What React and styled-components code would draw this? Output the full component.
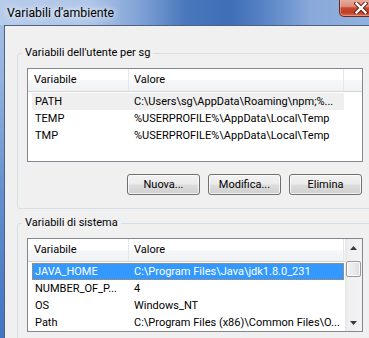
import React from "react";
import styled, { createGlobalStyle } from "styled-components";

const FONT = `Roboto, "Liberation Sans", sans-serif`;

const GlobalStyle = createGlobalStyle`
  html, body { margin: 0; padding: 0; overflow: hidden; background: #f0f0f0; }
  body { font-family: ${FONT}; font-size: 11px; color: #000; }
  * { box-sizing: border-box; }
`;

const Window = styled.div`
  width: 390px;
  height: 338px;
  display: flex;
  flex-direction: column;
  background: linear-gradient(to bottom, #a9c2e4 0px, #93b2dd 80px, #6590cf 190px, #4274c3 338px);
  overflow: hidden;
`;

const TitleBar = styled.div`
  height: 25px;
  flex: none;
  display: flex;
  align-items: flex-start;
  justify-content: space-between;
  background: linear-gradient(
    to right,
    #b7ccea 0px,
    #afc6e8 90px,
    #7fa2d6 140px,
    #4a78bd 185px,
    #3f6eb6 230px,
    #5d88c8 270px,
    #88a9da 310px,
    #94b3de 100%
  );
`;

const Title = styled.div`
  padding-left: 7px;
  line-height: 26px;
  font-size: 12.3px;
  font-family: ${FONT};
  color: #000;
  text-shadow: 0 0 6px rgba(255, 255, 255, 0.95), 0 0 10px rgba(255, 255, 255, 0.7);
`;

const CloseButton = styled.div`
  width: 43px;
  height: 18px;
  margin-right: 8px;
  margin-top: -1px;
  border: 1px solid #6a2a20;
  border-top: none;
  border-radius: 0 0 5px 5px;
  background: linear-gradient(
    to bottom,
    #eab0a2 0%,
    #d98a78 45%,
    #c5482f 52%,
    #c23d22 78%,
    #db6a48 100%
  );
  box-shadow: inset 0 0 0 1px rgba(255, 200, 190, 0.45);
  display: flex;
  align-items: center;
  justify-content: center;
`;

const Client = styled.div`
  flex: 1;
  min-height: 0;
  margin: 0 4px;
  border: 1px solid #4d6283;
  border-bottom: none;
  background: #f0f0f0;
  padding: 0 12px;
  overflow: hidden;
`;

const Group = styled.fieldset`
  margin: ${(p) => p.$top}px 0 0 0;
  padding: 8px 9px 13px 9px;
  border: 1px solid #d5dfe5;
  border-radius: 3px;
  min-width: 0;
`;

const Legend = styled.legend`
  margin-left: -5px;
  padding: 0 3px;
  font-size: 11px;
  line-height: 14px;
  font-family: ${FONT};
  color: #000;
`;

const ListBox = styled.div`
  height: 94px;
  border: 1px solid #828790;
  background: #fff;
  display: flex;
  overflow: hidden;
`;

const ListMain = styled.div`
  flex: 1;
  min-width: 0;
  display: flex;
  flex-direction: column;
`;

const Header = styled.div`
  display: flex;
  flex: none;
  height: 23px;
  margin-bottom: 1px;
  border-bottom: 1px solid #d5d5d5;
  background: linear-gradient(to bottom, #ffffff 0%, #ffffff 48%, #f6f7f8 52%, #f1f2f4 100%);
`;

const HeaderCell = styled.div`
  flex: ${(p) => (p.$w ? "none" : "1")};
  width: ${(p) => (p.$w ? `${p.$w}px` : "auto")};
  padding-left: ${(p) => p.$pad}px;
  border-right: ${(p) => (p.$w ? "1px solid #e3e8ee" : "none")};
  line-height: 22px;
  white-space: nowrap;
  overflow: hidden;
`;

const Row = styled.div`
  display: grid;
  grid-template-columns: 97px 215px;
  width: 312px;
  height: 17px;
  margin-left: 4px;
  line-height: 17px;
  background: ${(p) => (p.$sel ? "#3399ff" : p.$hl ? "#efefef" : "transparent")};
  color: ${(p) => (p.$sel ? "#ffffff" : "#000000")};
  outline: ${(p) => (p.$sel ? "1px dotted #d9892c" : "none")};
  outline-offset: -1px;
`;

const Cell = styled.div`
  padding-left: ${(p) => p.$pad}px;
  padding-right: 2px;
  white-space: nowrap;
  overflow: hidden;
  text-overflow: ellipsis;
`;

const ButtonRow = styled.div`
  display: flex;
  justify-content: flex-end;
  gap: 8px;
  margin-top: 12px;
  margin-right: 1px;
`;

const Button = styled.button`
  width: 73px;
  height: 21px;
  padding: 0;
  border: 1px solid #707070;
  border-radius: 3px;
  background: linear-gradient(to bottom, #f2f2f2 0%, #ebebeb 48%, #dddddd 52%, #cfcfcf 100%);
  box-shadow: inset 0 0 0 1px rgba(255, 255, 255, 0.75);
  font-family: ${FONT};
  font-size: 11px;
  color: #000;
  line-height: 19px;
`;

const ScrollBar = styled.div`
  width: 17px;
  flex: none;
  display: flex;
  flex-direction: column;
  background: linear-gradient(to right, #e6e6e6 0px, #efefef 3px, #f3f3f3 100%);
`;

const ArrowButton = styled.div`
  height: 17px;
  flex: none;
  display: flex;
  align-items: center;
  justify-content: center;
`;

const Thumb = styled.div`
  height: 16px;
  margin: 5px 1px 0 1px;
  border: 1px solid #9b9b9b;
  border-radius: 2px;
  background: linear-gradient(to right, #f4f4f4 0%, #eaeaea 50%, #dcdcdc 100%);
  box-shadow: inset 0 0 0 1px rgba(255, 255, 255, 0.8);
`;

const Spacer = styled.div`
  flex: 1;
`;

const Arrow = ({ down }) => (
  <svg width="7" height="4" viewBox="0 0 7 4">
    <polygon points={down ? "0,0 7,0 3.5,4" : "3.5,0 7,4 0,4"} fill="#3a3a3a" />
  </svg>
);

const CloseX = () => (
  <svg width="14" height="12" viewBox="0 0 14 12">
    <path d="M2.5 1.5 L11.5 10.5 M11.5 1.5 L2.5 10.5" stroke="#5a1d14" strokeWidth="4.2" strokeLinecap="square" />
    <path d="M2.5 1.5 L11.5 10.5 M11.5 1.5 L2.5 10.5" stroke="#ffffff" strokeWidth="2.4" strokeLinecap="square" />
  </svg>
);

const userVars = [
  { name: "PATH", value: "C:\\Users\\sg\\AppData\\Roaming\\npm;%...", hl: true },
  { name: "TEMP", value: "%USERPROFILE%\\AppData\\Local\\Temp" },
  { name: "TMP", value: "%USERPROFILE%\\AppData\\Local\\Temp" },
];

const sysVars = [
  { name: "JAVA_HOME", value: "C:\\Program Files\\Java\\jdk1.8.0_231", sel: true },
  { name: "NUMBER_OF_P...", value: "4" },
  { name: "OS", value: "Windows_NT" },
  { name: "Path", value: "C:\\Program Files (x86)\\Common Files\\O..." },
];

const VarList = ({ rows, scroll }) => (
  <ListBox>
    <ListMain>
      <Header>
        <HeaderCell $w={101} $pad={6}>Variabile</HeaderCell>
        <HeaderCell $w={215} $pad={5}>Valore</HeaderCell>
        <HeaderCell />
      </Header>
      {rows.map((r) => (
        <Row key={r.name} $sel={r.sel} $hl={r.hl}>
          <Cell $pad={3}>{r.name}</Cell>
          <Cell $pad={5}>{r.value}</Cell>
        </Row>
      ))}
    </ListMain>
    {scroll && (
      <ScrollBar>
        <ArrowButton>
          <Arrow />
        </ArrowButton>
        <Thumb />
        <Spacer />
        <ArrowButton>
          <Arrow down />
        </ArrowButton>
      </ScrollBar>
    )}
  </ListBox>
);

export default function App() {
  return (
    <>
      <GlobalStyle />
      <Window>
        <TitleBar>
          <Title>Variabili d'ambiente</Title>
          <CloseButton>
            <CloseX />
          </CloseButton>
        </TitleBar>
        <Client>
          <Group $top={20}>
            <Legend>Variabili dell'utente per sg</Legend>
            <VarList rows={userVars} />
            <ButtonRow>
              <Button>Nuova...</Button>
              <Button>Modifica...</Button>
              <Button>Elimina</Button>
            </ButtonRow>
          </Group>
          <Group $top={7}>
            <Legend>Variabili di sistema</Legend>
            <VarList rows={sysVars} scroll />
          </Group>
        </Client>
      </Window>
    </>
  );
}
